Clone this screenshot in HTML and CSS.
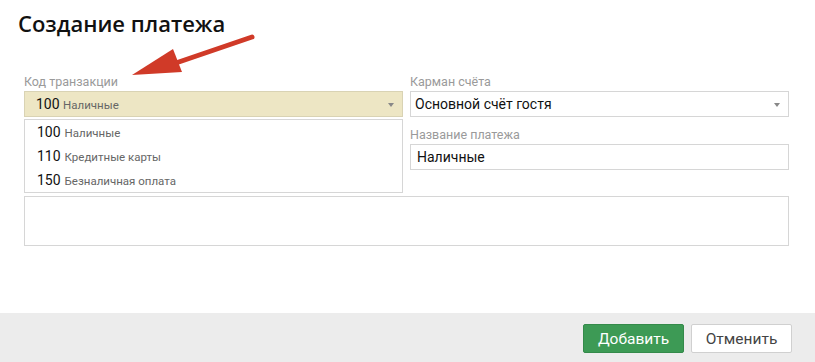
FILE: index.html
```html
<!DOCTYPE html>
<html lang="ru">
<head>
    <meta charset="UTF-8">
    <title>Создание платежа</title>
    <link rel="stylesheet" href="styles.css">
</head>
<body>

    <div class="dialog">
        <h1>Создание платежа</h1>

        <!-- Payment form -->
        <form class="payment-form">
            <div class="form-row">
                <div class="form-col">
                    <label class="field-label">Код транзакции</label>
                    <div class="select select-open">
                        <span class="code">100</span> <span class="hint">Наличные</span>
                        <span class="caret"></span>
                    </div>
                    <ul class="options">
                        <li><span class="code">100</span> <span class="hint">Наличные</span></li>
                        <li><span class="code">110</span> <span class="hint">Кредитные карты</span></li>
                        <li><span class="code">150</span> <span class="hint">Безналичная оплата</span></li>
                    </ul>
                </div>

                <div class="form-col">
                    <label class="field-label">Карман счёта</label>
                    <div class="select">
                        <span class="value">Основной счёт гостя</span>
                        <span class="caret"></span>
                    </div>
                    <label class="field-label second">Название платежа</label>
                    <div class="input">Наличные</div>
                </div>
            </div>

            <div class="textarea"></div>
        </form>

        <!-- Arrow pointing at the transaction code -->
        <svg class="arrow" width="140" height="60" viewBox="0 0 140 60">
            <line x1="132" y1="7" x2="50" y2="35" stroke="#d03a28" stroke-width="5" stroke-linecap="round"/>
            <polygon points="12,45 53,19 62,42" fill="#d03a28"/>
        </svg>

        <div class="footer">
            <button type="button" class="btn btn-primary">Добавить</button>
            <button type="button" class="btn">Отменить</button>
        </div>
    </div>

</body>
</html>
```

FILE: styles.css
```css
body {
    margin: 0;
    padding: 0;
    font-family: Roboto, "Open Sans", sans-serif;
    background: #fff;
    color: #222;
}
.dialog {
    position: relative;
    width: 815px;
    height: 362px;
    display: flex;
    flex-direction: column;
}
h1 {
    margin: 8px 0 0 18px;
    font-family: "Open Sans", sans-serif;
    font-weight: 600;
    font-size: 22px;
    line-height: 30px;
    color: #111;
}
.payment-form {
    padding: 36px 26px 0 24px;
    flex: 1;
}
.form-row {
    display: grid;
    grid-template-columns: 379px 379px;
    gap: 7px;
}
.field-label {
    display: block;
    font-size: 12.5px;
    line-height: 16px;
    color: #9a9a9a;
    margin-bottom: 1px;
}
.field-label.second {
    margin-top: 10px;
}
.select, .input {
    position: relative;
    box-sizing: border-box;
    height: 26px;
    border: 1px solid #d6d6d6;
    padding: 0 20px 0 4px;
    line-height: 24px;
    font-size: 14px;
    color: #111;
}
.select-open {
    background: #ede6c4;
    border-color: #d9d3b4;
    padding-left: 11px;
}
.input {
    padding-left: 6px;
}
.code {
    font-size: 14px;
    line-height: 1;
    color: #111;
}
.hint {
    font-size: 11.5px;
    line-height: 1;
    color: #666;
}
.caret {
    position: absolute;
    right: 8px;
    top: 11px;
    border-left: 3px solid transparent;
    border-right: 3px solid transparent;
    border-top: 4px solid #888;
}
.options {
    list-style: none;
    margin: 2px 0 0;
    padding: 0;
    border: 1px solid #d6d6d6;
    background: #fff;
}
.options li {
    padding-left: 12px;
    height: 24px;
    line-height: 24px;
}
.textarea {
    margin-top: 3px;
    height: 50px;
    border: 1px solid #d6d6d6;
    box-sizing: border-box;
}
.arrow {
    position: absolute;
    left: 120px;
    top: 30px;
}
.footer {
    height: 49px;
    background: #ececec;
    display: flex;
    justify-content: flex-end;
    align-items: center;
    gap: 7px;
    padding-right: 23px;
}
.btn {
    width: 101px;
    height: 29px;
    font-family: Roboto, sans-serif;
    font-size: 15.5px;
    color: #444;
    background: #fff;
    border: 1px solid #d0d0d0;
    border-radius: 2px;
    margin-top: 2px;
}
.btn-primary {
    background: #3d9a55;
    border-color: #348a4a;
    color: #fff;
}
```
